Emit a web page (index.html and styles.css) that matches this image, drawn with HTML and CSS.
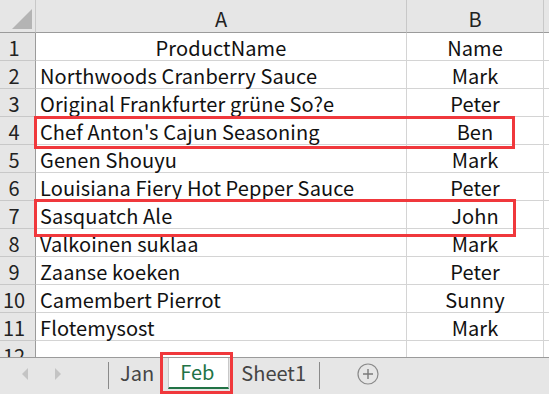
FILE: index.html
```html
<!DOCTYPE html>
<html lang="en">

<head>
    <meta charset="UTF-8">
    <meta name="viewport" content="width=device-width, initial-scale=1.0">
    <link rel="stylesheet" href="styles.css">
    <title>Sheet</title>
</head>

<body>
    <div class="sheet">
        <div class="grid">
            <div class="corner"><span class="tri"></span></div>
            <div class="colhead">A</div>
            <div class="colhead">B</div>
            <div class="colhead rest"></div>

            <div class="rowhead">1</div>
            <div class="cell center">ProductName</div>
            <div class="cell center">Name</div>
            <div class="cell rest"></div>

            <div class="rowhead">2</div>
            <div class="cell">Northwoods Cranberry Sauce</div>
            <div class="cell center">Mark</div>
            <div class="cell rest"></div>

            <div class="rowhead">3</div>
            <div class="cell">Original Frankfurter grüne So?e</div>
            <div class="cell center">Peter</div>
            <div class="cell rest"></div>

            <div class="rowhead">4</div>
            <div class="cell">Chef Anton's Cajun Seasoning</div>
            <div class="cell center">Ben</div>
            <div class="cell rest"></div>

            <div class="rowhead">5</div>
            <div class="cell">Genen Shouyu</div>
            <div class="cell center">Mark</div>
            <div class="cell rest"></div>

            <div class="rowhead">6</div>
            <div class="cell">Louisiana Fiery Hot Pepper Sauce</div>
            <div class="cell center">Peter</div>
            <div class="cell rest"></div>

            <div class="rowhead">7</div>
            <div class="cell">Sasquatch Ale</div>
            <div class="cell center">John</div>
            <div class="cell rest"></div>

            <div class="rowhead">8</div>
            <div class="cell">Valkoinen suklaa</div>
            <div class="cell center">Mark</div>
            <div class="cell rest"></div>

            <div class="rowhead">9</div>
            <div class="cell">Zaanse koeken</div>
            <div class="cell center">Peter</div>
            <div class="cell rest"></div>

            <div class="rowhead">10</div>
            <div class="cell">Camembert Pierrot</div>
            <div class="cell center">Sunny</div>
            <div class="cell rest"></div>

            <div class="rowhead">11</div>
            <div class="cell">Flotemysost</div>
            <div class="cell center">Mark</div>
            <div class="cell rest"></div>

            <div class="rowhead">12</div>
            <div class="cell"></div>
            <div class="cell"></div>
            <div class="cell rest"></div>
        </div>

        <div class="mark mark-row4"></div>
        <div class="mark mark-row7"></div>
    </div>

    <div class="tabbar">
        <div class="nav">
            <svg width="10" height="14" viewBox="0 0 10 14"><path d="M8 1 L2 7 L8 13 Z" fill="#c4c4c4"/></svg>
            <svg width="10" height="14" viewBox="0 0 10 14"><path d="M2 1 L8 7 L2 13 Z" fill="#c4c4c4"/></svg>
        </div>
        <span class="sep"></span>
        <div class="tab">Jan</div>
        <div class="tab active">Feb</div>
        <div class="tab">Sheet1</div>
        <span class="sep"></span>
        <div class="add">
            <svg width="22" height="22" viewBox="0 0 22 22">
                <circle cx="11" cy="11" r="10" fill="none" stroke="#8a8a8a" stroke-width="1.2"/>
                <path d="M11 6 V16 M6 11 H16" stroke="#7a7a7a" stroke-width="1.4"/>
            </svg>
        </div>
        <div class="mark mark-tab"></div>
    </div>
</body>

</html>
```

FILE: styles.css
```css
body {
    margin: 0;
    padding: 0;
    width: 549px;
    height: 394px;
    overflow: hidden;
    font-family: 'Noto Sans CJK SC', 'Noto Sans', sans-serif;
    color: #111;
    background: #fff;
}

.sheet {
    position: relative;
    height: 357px;
    overflow: hidden;
}

.grid {
    display: grid;
    grid-template-columns: 36px 371px 137px 1fr;
    grid-template-rows: 33px repeat(12, 28px);
}

.corner,
.colhead,
.rowhead {
    background: #e6e6e6;
    box-sizing: border-box;
}

.corner {
    border-right: 1px solid #c8c8c8;
    border-bottom: 1px solid #9b9b9b;
    position: relative;
}

.tri {
    position: absolute;
    left: 12px;
    top: 9px;
    width: 0;
    height: 0;
    border-left: 20px solid transparent;
    border-bottom: 20px solid #b4b4b4;
}

.colhead {
    border-right: 1px solid #c8c8c8;
    border-bottom: 1px solid #9b9b9b;
    font-size: 20px;
    line-height: 25px;
    color: #222;
    display: flex;
    align-items: flex-end;
    justify-content: center;
    padding-bottom: 1px;
}

.colhead.rest {
    border-right: none;
}

.rowhead {
    border-right: 1px solid #9b9b9b;
    border-bottom: 1px solid #c8c8c8;
    font-size: 20px;
    line-height: 25px;
    color: #222;
    display: flex;
    align-items: flex-end;
    justify-content: center;
    padding-right: 7px;
}

.cell {
    box-sizing: border-box;
    border-right: 1px solid #d4d4d4;
    border-bottom: 1px solid #d4d4d4;
    font-size: 20px;
    line-height: 25px;
    letter-spacing: 0.1px;
    white-space: nowrap;
    display: flex;
    align-items: flex-end;
    padding-left: 4px;
}

.cell.center {
    justify-content: center;
    padding-left: 0;
}

.cell.rest {
    border-right: none;
}

.mark {
    position: absolute;
    border: 3px solid #f0383c;
    box-sizing: border-box;
}

.mark-row4 {
    left: 34px;
    top: 116px;
    width: 481px;
    height: 33px;
}

.mark-row7 {
    left: 34px;
    top: 199px;
    width: 482px;
    height: 38px;
}

.tabbar {
    position: relative;
    height: 37px;
    box-sizing: border-box;
    border-top: 1px solid #9b9b9b;
    background: #e6e6e6;
    display: flex;
    align-items: stretch;
    font-family: 'Noto Sans CJK SC', 'Noto Sans', sans-serif;
}

.nav {
    width: 108px;
    display: flex;
    align-items: center;
    gap: 23px;
    padding-left: 20px;
    padding-bottom: 4px;
    box-sizing: border-box;
}

.sep {
    width: 1px;
    background: #8a8a8a;
    margin: 4px 0 5px;
}

.tab {
    font-size: 20px;
    color: #444;
    padding: 0 13px 7px 11px;
    display: flex;
    align-items: center;
}

.tab:last-of-type {
    padding-right: 15px;
}

.tab.active {
    background: #fff;
    color: #217346;
    margin: 0 1px 5px;
    border-left: 1px solid #c8c8c8;
    border-right: 1px solid #c8c8c8;
    border-bottom: 2px solid #217346;
    padding: 0 14px 2px 11px;
}

.add {
    display: flex;
    align-items: center;
    padding-left: 37px;
    padding-bottom: 4px;
}

.mark-tab {
    left: 160px;
    top: -6px;
    width: 73px;
    height: 42px;
}
```
